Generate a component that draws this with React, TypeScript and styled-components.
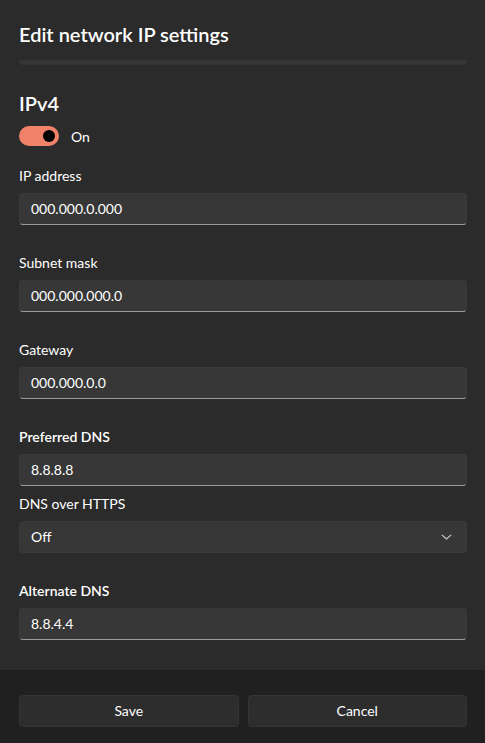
import styled, { createGlobalStyle } from "styled-components"

const GlobalStyle = createGlobalStyle`
	html, body {
		margin: 0;
		padding: 0;
		background: #2b2b2b;
	}
	* {
		box-sizing: border-box;
	}
`

// Whole dialog: scroll area on top, button bar at the bottom
const Dialog = styled.div`
	width: 485px;
	height: 743px;
	display: flex;
	flex-direction: column;
	background: #2b2b2b;
	color: #ffffff;
	font-family: "Segoe UI", Lato, "Noto Sans", sans-serif;
	overflow: hidden;
`

const Body = styled.div`
	flex: 1;
	display: flex;
	flex-direction: column;
	padding: 20px 18px 0 19px;
`

const Title = styled.h1`
	margin: 0;
	font-size: 20px;
	line-height: 28px;
	font-weight: 600;
`

// Bottom edge of the card that scrolled out of view
const ScrolledEdge = styled.div`
	margin-top: 12px;
	height: 5px;
	background: #353535;
	border-radius: 0 0 4px 4px;
`

const Heading = styled.h2`
	margin: 24px 0 0 0;
	font-size: 20px;
	line-height: 28px;
	font-weight: 600;
`

const ToggleRow = styled.div`
	margin-top: 9px;
	display: flex;
	align-items: center;
	gap: 12px;
	font-size: 14px;
`

const Toggle = styled.div`
	width: 40px;
	height: 20px;
	border-radius: 10px;
	background: #f0826a;
	display: flex;
	align-items: center;
	justify-content: flex-end;
	padding-right: 4px;
`

const Knob = styled.div`
	width: 12px;
	height: 12px;
	border-radius: 50%;
	background: #000000;
`

const Field = styled.div<{ $gap: number }>`
	margin-top: ${(p) => p.$gap}px;
	display: flex;
	flex-direction: column;
	gap: 7px;
`

const Label = styled.div<{ $strong?: boolean }>`
	font-size: 14px;
	line-height: 20px;
	font-weight: ${(p) => (p.$strong ? 600 : 400)};
`

const Input = styled.div`
	height: 32px;
	display: flex;
	align-items: center;
	padding: 0 11px 1px 11px;
	background: #373737;
	border: 1px solid #3a3a3a;
	border-bottom-color: #9a9a9a;
	border-radius: 4px;
	font-size: 14px;
`

const Select = styled(Input)`
	justify-content: space-between;
	padding-right: 14px;
	border-bottom-color: #3a3a3a;
`

const Footer = styled.div`
	height: 73px;
	display: grid;
	grid-template-columns: 1fr 1fr;
	gap: 9px;
	padding: 24px 18px 0 19px;
	background: #202020;
	border-top: 1px solid #1d1d1d;
`

const Button = styled.div`
	height: 32px;
	display: flex;
	align-items: center;
	justify-content: center;
	padding-bottom: 2px;
	background: #2d2d2d;
	border: 1px solid #353535;
	border-radius: 4px;
	font-size: 14px;
`

const Chevron = () => (
	<svg width="11" height="6" viewBox="0 0 11 6" fill="none">
		<path d="M0.8 0.8L5.5 5L10.2 0.8" stroke="#cfcfcf" strokeWidth="1.1" />
	</svg>
)

export default function App() {
	return (
		<>
			<GlobalStyle />
			<Dialog>
				<Body>
					<Title>Edit network IP settings</Title>
					<ScrolledEdge />
					<Heading>IPv4</Heading>
					<ToggleRow>
						<Toggle>
							<Knob />
						</Toggle>
						<span>On</span>
					</ToggleRow>

					<Field $gap={20}>
						<Label>IP address</Label>
						<Input>000.000.0.000</Input>
					</Field>
					<Field $gap={28}>
						<Label>Subnet mask</Label>
						<Input>000.000.000.0</Input>
					</Field>
					<Field $gap={28}>
						<Label>Gateway</Label>
						<Input>000.000.0.0</Input>
					</Field>
					<Field $gap={28}>
						<Label $strong>Preferred DNS</Label>
						<Input>8.8.8.8</Input>
					</Field>
					<Field $gap={8}>
						<Label>DNS over HTTPS</Label>
						<Select>
							<span>Off</span>
							<Chevron />
						</Select>
					</Field>
					<Field $gap={28}>
						<Label $strong>Alternate DNS</Label>
						<Input>8.8.4.4</Input>
					</Field>
				</Body>
				<Footer>
					<Button>Save</Button>
					<Button>Cancel</Button>
				</Footer>
			</Dialog>
		</>
	)
}
